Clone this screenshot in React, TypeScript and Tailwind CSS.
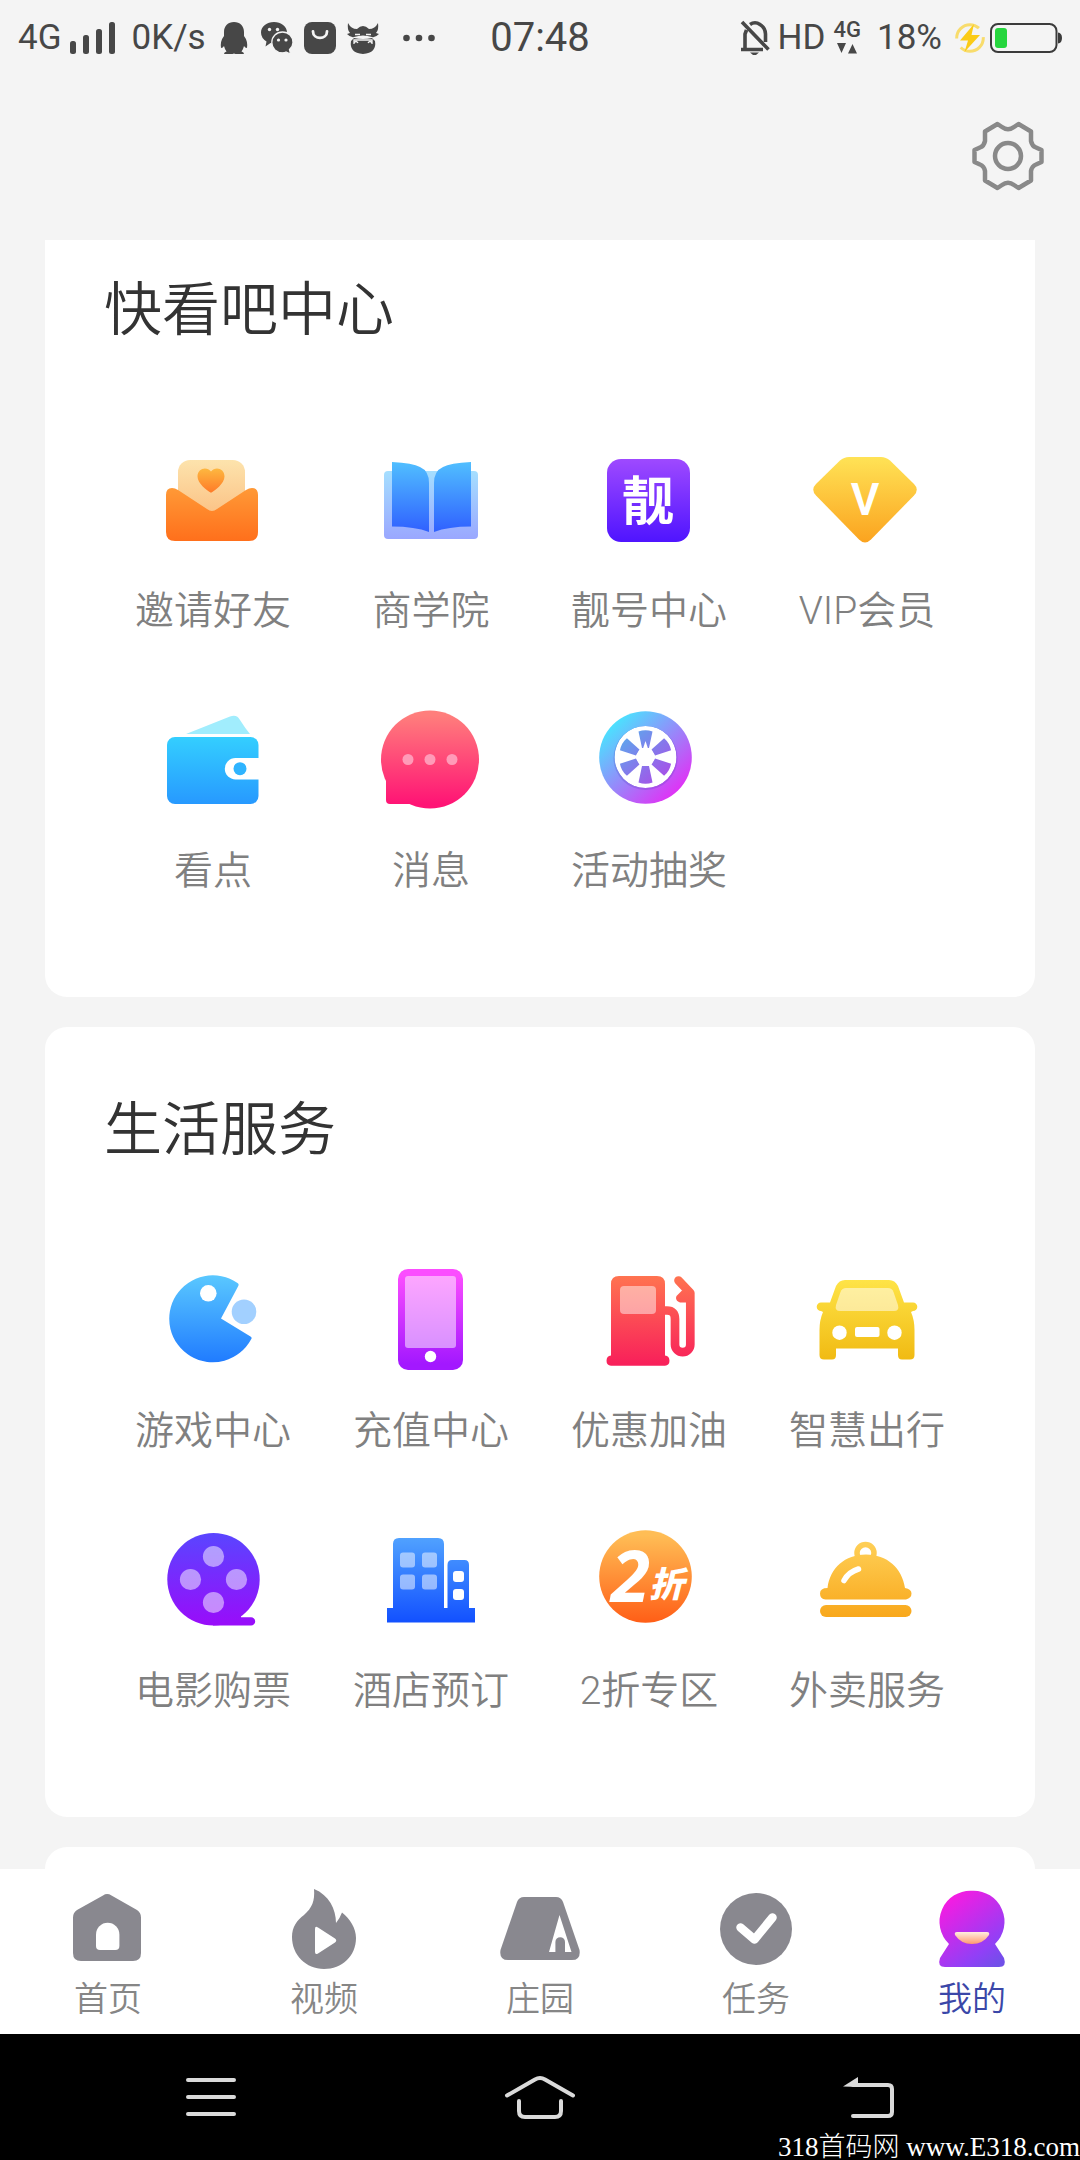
import type { ReactNode } from "react";

type Entry = {
  label: string;
  icon: ReactNode;
};

const Gradient = ({ id, from, to, diagonal = false }: { id: string; from: string; to: string; diagonal?: boolean }) => (
  <linearGradient
    id={id}
    gradientUnits="userSpaceOnUse"
    x1={diagonal ? "20" : "0"}
    y1={diagonal ? "20" : "15"}
    x2={diagonal ? "90" : "0"}
    y2={diagonal ? "95" : "104"}
  >
    <stop offset="0" stopColor={from} />
    <stop offset="1" stopColor={to} />
  </linearGradient>
);

const Art = ({ children }: { children: ReactNode }) => (
  <svg viewBox="0 0 120 120" className="h-[120px] w-[120px]" aria-hidden="true">
    {children}
  </svg>
);

const InviteIcon = () => (
  <Art>
    <defs>
      <Gradient id="invite" from="#ffb347" to="#ff6d1a" />
      <Gradient id="inviteLetter" from="#fde6b0" to="#fab070" />
      <linearGradient id="inviteHeart" x1="0" y1="0" x2="0" y2="1">
        <stop offset="0" stopColor="#fdb840" />
        <stop offset="1" stopColor="#ff7a28" />
      </linearGradient>
    </defs>
    <rect x="25" y="20" width="67" height="60" rx="12" fill="url(#inviteLetter)" />
    <path
      d="M13 55Q13 48 19 48Q22 48 25 50L54 69Q59 73 64 69L93 50Q96 48 99 48Q105 48 105 55V92Q105 101 96 101H22Q13 101 13 92Z"
      fill="url(#invite)"
    />
    <path
      d="M58 52.7C54 50.5 44.5 43.5 44.5 36.5C44.5 28 54 26 58 31.5C62 26 71.5 28 71.5 36.5C71.5 43.5 62 50.5 58 52.7Z"
      fill="url(#inviteHeart)"
    />
  </Art>
);

const BookIcon = () => (
  <Art>
    <defs>
      <Gradient id="book" from="#54c8ff" to="#2a50ff" />
      <Gradient id="bookCover" from="#a8ecff" to="#99a3ff" />
    </defs>
    <rect x="13" y="31" width="94" height="68" rx="4" fill="url(#bookCover)" />
    <path d="M21 22Q42 23 49 27Q58 31 58 43V92Q44 86.5 21 86.5Z" fill="url(#book)" />
    <path d="M100 22Q79 23 72 27Q63 31 63 43V92Q77 86.5 100 86.5Z" fill="url(#book)" />
  </Art>
);

const NumberIcon = () => (
  <Art>
    <defs>
      <Gradient id="number" from="#a24cff" to="#4d13ff" />
    </defs>
    <rect x="18" y="19" width="83" height="83" rx="14" fill="url(#number)" />
    <text x="59" y="80" textAnchor="middle" fontSize="52" fontWeight="700" fill="#fff">
      靓
    </text>
  </Art>
);

const VipIcon = () => (
  <Art>
    <defs>
      <Gradient id="vip" from="#ffe457" to="#fba21e" />
    </defs>
    <path
      d="M42 17H74Q79 17 83 20.5L107 44Q112.5 49.5 107 55.5L64 99.5Q58 105.5 52 99.5L9 55.5Q3.5 49.5 9 44L33 20.5Q37 17 42 17Z"
      fill="url(#vip)"
    />
    <text x="58" y="75" textAnchor="middle" fontSize="44" fontWeight="600" fill="#fff">
      V
    </text>
  </Art>
);

const WalletIcon = () => (
  <Art>
    <defs>
      <Gradient id="wallet" from="#38e0ff" to="#2799ff" />
    </defs>
    <path d="M33 34L77 16.5Q84 14 87 20Q92 28 97 34Z" fill="#a1edfd" />
    <rect x="14" y="37" width="91.5" height="67" rx="8" fill="url(#wallet)" />
    <path d="M106 58H82.5a10.7 10.7 0 0 0 0 21.4H106Z" fill="#fff" />
    <circle cx="87" cy="68.7" r="6.5" fill="#2fb4ff" />
  </Art>
);

const MessageIcon = () => (
  <Art>
    <defs>
      <Gradient id="message" from="#ff7e7c" to="#ff1475" />
    </defs>
    <circle cx="59" cy="59.5" r="49" fill="url(#message)" />
    <path d="M15 76V100Q15 104 19 104H42L50 80Z" fill="url(#message)" />
    <g fill="#ff9bb8">
      <circle cx="37" cy="59.5" r="5.5" />
      <circle cx="59" cy="59.5" r="5.5" />
      <circle cx="81" cy="59.5" r="5.5" />
    </g>
  </Art>
);

const WheelIcon = () => (
  <Art>
    <defs>
      <Gradient id="wheel" from="#42ecff" to="#e52cf5" diagonal />
      <mask id="wheelMask">
        <circle cx="56.5" cy="57" r="31" fill="#fff" />
        {[0, 60, 120, 180, 240, 300].map((angle) => (
          <path
            key={angle}
            d="M49.5 31.5Q56.5 29 63.5 31.5L60 48H53Z"
            fill="#000"
            transform={`rotate(${angle} 56.5 57)`}
          />
        ))}
        <path d="M53.5 50L56.5 41L59.5 50Z" fill="#fff" />
        <circle cx="56.5" cy="57" r="9" fill="#fff" />
      </mask>
    </defs>
    <circle cx="56.5" cy="57.5" r="46.3" fill="url(#wheel)" />
    <circle cx="56.5" cy="58" r="32" fill="#4a3fb8" opacity="0.22" />
    <circle cx="56.5" cy="57" r="31" fill="#fff" mask="url(#wheelMask)" />
  </Art>
);

const GameIcon = () => (
  <Art>
    <defs>
      <Gradient id="game" from="#5ac8ff" to="#1f7aff" />
    </defs>
    <path d="M84.5 23A43.5 43.5 0 1 0 98 79.5Q99.5 77.5 97.5 76.5L68 58.5L85 26.5Q86.5 24.2 84.5 23Z" fill="url(#game)" />
    <circle cx="55.3" cy="33.3" r="8.3" fill="#fff" />
    <circle cx="91" cy="51.7" r="12.3" fill="#a2d0ff" />
  </Art>
);

const PhoneIcon = () => (
  <Art>
    <defs>
      <Gradient id="phone" from="#fb4dff" to="#a318ff" />
    </defs>
    <rect x="27" y="9" width="65" height="101" rx="10" fill="url(#phone)" />
    <rect x="34" y="16" width="51" height="72" rx="3" fill="#fff" opacity="0.5" />
    <circle cx="59.5" cy="96.5" r="5.7" fill="#fff" />
  </Art>
);

const FuelIcon = () => (
  <Art>
    <defs>
      <Gradient id="fuel" from="#ff7450" to="#f8205a" />
    </defs>
    <path
      d="M30 16H68Q76 16 76 24V95.5a5.2 5.2 0 0 1 0 10.3H22a5.2 5.2 0 0 1 0-10.3V24Q22 16 30 16Z"
      fill="url(#fuel)"
    />
    <path
      d="M75 50.5H78Q86 50.5 86 59V84.5a7.6 7.6 0 0 0 15.3 0V33L89.5 20.5"
      fill="none"
      stroke="url(#fuel)"
      strokeWidth="8.7"
      strokeLinecap="round"
      strokeLinejoin="round"
    />
    <path d="M93 30.5L87.5 36Q86 39 89 41.5L91 42.5H99V30Z" fill="url(#fuel)" />
    <rect x="31" y="26" width="36" height="28" rx="4" fill="#fff" opacity="0.48" />
  </Art>
);

const CarIcon = () => (
  <Art>
    <defs>
      <Gradient id="car" from="#ffe64a" to="#f0b810" />
    </defs>
    <path
      d="M38 20H82Q88 20 91 26L97 42.5H106a4.3 4.3 0 0 1 0 8.6L104 52Q107.5 60 107.5 70V95Q107.5 99.5 103 99.5H95Q91 99.5 91 95V88.5H29V95Q29 99.5 25 99.5H17Q12.5 99.5 12.5 95V70Q12.5 60 16 52L14 51.1a4.3 4.3 0 0 1 0-8.6H23L29 26Q32 20 38 20Z"
      fill="url(#car)"
    />
    <path d="M39 28H81Q85 28 86.5 32L91 45Q92.5 51 87 51H33Q27.5 51 29 45L33.5 32Q35 28 39 28Z" fill="#fff" opacity="0.5" />
    <circle cx="32.5" cy="72.7" r="7.2" fill="#fff" />
    <circle cx="87.5" cy="72.7" r="7.2" fill="#fff" />
    <rect x="48" y="67" width="24.5" height="10" rx="2" fill="#fff" />
  </Art>
);

const FilmIcon = () => (
  <Art>
    <defs>
      <Gradient id="film" from="#5b44ff" to="#980dfa" />
    </defs>
    <circle cx="60.5" cy="59.3" r="46.2" fill="url(#film)" />
    <path d="M60 90H88V97.2H98a4.2 4.2 0 0 1 0 8.4H60Z" fill="url(#film)" />
    <g fill="#fff" opacity="0.5">
      <circle cx="60.5" cy="36.5" r="10.6" />
      <circle cx="37.5" cy="59.5" r="10.6" />
      <circle cx="83.5" cy="59.5" r="10.6" />
      <circle cx="60.5" cy="82.5" r="10.6" />
    </g>
  </Art>
);

const HotelIcon = () => (
  <Art>
    <defs>
      <Gradient id="hotel" from="#52a4ff" to="#114fff" />
    </defs>
    <path
      d="M16 88H22V24Q22 18 28 18H67Q73 18 73 24V88H76.5V45Q76.5 40 81 40H93.5Q98 40 98 45V88H104V102.5H16Z"
      fill="url(#hotel)"
    />
    <g fill="#fff" opacity="0.5">
      <rect x="29" y="32.5" width="15" height="15" rx="3" />
      <rect x="51" y="32.5" width="15" height="15" rx="3" />
      <rect x="29" y="54.5" width="15" height="15" rx="3" />
      <rect x="51" y="54.5" width="15" height="15" rx="3" />
    </g>
    <rect x="82" y="51" width="11" height="11" rx="3" fill="#fff" />
    <rect x="82" y="69" width="11" height="11" rx="3" fill="#fff" />
  </Art>
);

const DiscountIcon = () => (
  <Art>
    <defs>
      <Gradient id="discount" from="#ffbd55" to="#ff5d16" />
    </defs>
    <circle cx="56.5" cy="56.5" r="46.3" fill="url(#discount)" />
    <text x="22" y="81.5" fontFamily="Open Sans" fontSize="71" fontWeight="700" fontStyle="italic" fill="#fff">
      2
    </text>
    <text x="60" y="77" fontSize="35" fontWeight="900" fontStyle="italic" fill="#fff">
      折
    </text>
  </Art>
);

const DishIcon = () => (
  <Art>
    <defs>
      <Gradient id="dish" from="#ffd35c" to="#f8a416" />
    </defs>
    <circle cx="58.5" cy="33" r="8.5" fill="none" stroke="url(#dish)" strokeWidth="5.5" />
    <path
      d="M20.5 68C23 48 38 34.5 59 34.5S95 48 98 68Q104.5 69 104.5 73.5T99 79.5H18.5Q13 79 13 73.5T20.5 68Z"
      fill="url(#dish)"
    />
    <rect x="13" y="85" width="91.5" height="12" rx="6" fill="url(#dish)" />
    <path d="M37 60.5Q41.5 52 51.5 49" fill="none" stroke="#fff" strokeWidth="5.5" strokeLinecap="round" />
  </Art>
);

const TabArt = ({ children }: { children: ReactNode }) => (
  <svg viewBox="0 0 80 80" className="h-20 w-20" fill="#89888f" aria-hidden="true">
    {children}
  </svg>
);

const tabs: Entry[] = [
  {
    label: "首页",
    icon: (
      <TabArt>
        <path d="M35 6.5Q39 3.7 43.5 6.5L69 21Q73 23.5 73 28.5V64Q73 72 65 72H13Q5 72 5 64V28.5Q5 23.5 9 21Z" />
        <path d="M28 45.5a11.7 11.7 0 0 1 23.4 0V57q0 4-4 4H32q-4 0-4-4Z" fill="#fff" />
      </TabArt>
    ),
  },
  {
    label: "视频",
    icon: (
      <TabArt>
        <path d="M30 0C45 6 52 20 52 34Q56 29 58 23.5C66 30 72 39 72 49C72 67 58 80 40 80C22 80 8 66 8 48C8 38 13 31 20 26C28 19 31 12 30 0Z" />
        <path d="M31 40Q31 36.5 34 38.5L51 49.5Q53.5 51.5 51 53.5L34 64.5Q31 66 31 63Z" fill="#fff" />
      </TabArt>
    ),
  },
  {
    label: "庄园",
    icon: (
      <TabArt>
        <path d="M24 8H56Q61 8 63 13L79.5 61Q81 71 72 71H8Q-1 71 0.5 61L17 13Q19 8 24 8Z" />
        <path d="M59.5 26L71.5 63H65V53a4.8 4.8 0 0 0-9.6 0V63H49Z" fill="#fff" />
      </TabArt>
    ),
  },
  {
    label: "任务",
    icon: (
      <TabArt>
        <circle cx="40" cy="40" r="36" />
        <path d="M24.5 38.5L38.5 50.5L56.5 28.5" fill="none" stroke="#fff" strokeWidth="8.5" strokeLinecap="round" strokeLinejoin="round" />
      </TabArt>
    ),
  },
  {
    label: "我的",
    icon: (
      <TabArt>
        <defs>
          <linearGradient id="me" gradientUnits="userSpaceOnUse" x1="18" y1="10" x2="68" y2="75">
            <stop offset="0" stopColor="#f41ce2" />
            <stop offset="0.75" stopColor="#9040f6" />
            <stop offset="1" stopColor="#7050e8" />
          </linearGradient>
          <linearGradient id="smile" x1="0" y1="0" x2="0" y2="1">
            <stop offset="0" stopColor="#ffeee0" />
            <stop offset="1" stopColor="#ff9870" />
          </linearGradient>
        </defs>
        <path d="M40 1.7A31 31 0 0 1 63 55L72 69Q75 78 67 78H13Q5 78 8 69L17 55A31 31 0 0 1 40 1.7Z" fill="url(#me)" />
        <path d="M25 43H55Q58 43 57 46Q51 55 40 55T23 46Q22 43 25 43Z" fill="url(#smile)" />
      </TabArt>
    ),
  },
];

const centerEntries: Entry[] = [
  { label: "邀请好友", icon: <InviteIcon /> },
  { label: "商学院", icon: <BookIcon /> },
  { label: "靓号中心", icon: <NumberIcon /> },
  { label: "VIP会员", icon: <VipIcon /> },
  { label: "看点", icon: <WalletIcon /> },
  { label: "消息", icon: <MessageIcon /> },
  { label: "活动抽奖", icon: <WheelIcon /> },
];

const lifeEntries: Entry[] = [
  { label: "游戏中心", icon: <GameIcon /> },
  { label: "充值中心", icon: <PhoneIcon /> },
  { label: "优惠加油", icon: <FuelIcon /> },
  { label: "智慧出行", icon: <CarIcon /> },
  { label: "电影购票", icon: <FilmIcon /> },
  { label: "酒店预订", icon: <HotelIcon /> },
  { label: "2折专区", icon: <DiscountIcon /> },
  { label: "外卖服务", icon: <DishIcon /> },
];

const StatusBar = () => (
  <div className="flex h-[75px] items-center px-[18px] text-[35px] leading-none text-[#474747]">
    <div className="flex flex-1 items-center">
      <span>4G</span>
      <svg viewBox="0 0 46 34" className="ml-2 h-[34px] w-[46px]" fill="currentColor" aria-hidden="true">
        <rect x="0" y="20" width="6" height="13" rx="2.5" />
        <rect x="13" y="14" width="6" height="19" rx="2.5" />
        <rect x="26" y="8" width="6" height="25" rx="2.5" />
        <rect x="39" y="1" width="6" height="32" rx="2.5" />
      </svg>
      <span className="ml-4">0K/s</span>
      <div className="ml-3 flex items-center gap-[11px]">
        <svg viewBox="0 0 32 34" className="h-[34px] w-8" fill="currentColor" aria-hidden="true">
          <path d="M16 1C22 1 26 5 26 11V15Q30 20 29 27Q27 27 26 25Q25 29 23.5 30.5Q26 31 26 33H17.5L16 32.5L14.5 33H6Q6 31 8.5 30.5Q7 29 6 25Q5 27 3 27Q2 20 6 15V11C6 5 10 1 16 1Z" />
        </svg>
        <svg viewBox="0 0 32 34" className="h-[34px] w-8" fill="currentColor" aria-hidden="true">
          <path d="M13 1C20 1 26 5.5 26 11.5S20 22.5 13 22.5Q11 22.5 9.5 22L4.5 25.5L5.5 20.5Q0 17 0 11.5C0 5.5 6 1 13 1Z" />
          <path
            d="M21.5 11C27.5 11 32 15.5 32 21.5Q32 25.5 28.5 28.5L29.5 33L25 31Q23.5 31.8 21.5 31.8C15.5 31.8 10.8 27.5 10.8 21.5S15.5 11 21.5 11Z"
            stroke="#f4f4f4"
            strokeWidth="1.3"
          />
          <g fill="#f4f4f4">
            <circle cx="8.5" cy="8.5" r="1.7" />
            <circle cx="16.5" cy="8.5" r="1.7" />
            <circle cx="17.5" cy="19" r="1.6" />
            <circle cx="25" cy="19" r="1.6" />
          </g>
        </svg>
        <svg viewBox="0 0 32 34" className="h-[34px] w-8" aria-hidden="true">
          <rect x="0" y="1" width="32" height="32" rx="8" fill="currentColor" />
          <path d="M9 10.5C9 19 23 19 23 10.5" fill="none" stroke="#f4f4f4" strokeWidth="2.8" strokeLinecap="round" />
        </svg>
        <svg viewBox="0 0 32 34" className="h-[34px] w-8" fill="currentColor" aria-hidden="true">
          <path d="M1 2Q0 9 3 12L0 13Q4 17 7 16Q16 13 25 16Q28 17 32 13L29 12Q32 9 31 2Q28 8 22 8Q16 2 10 8Q4 8 1 2Z" />
          <path d="M7 17Q16 19 25 17L28 20Q30 32 16 33Q2 32 4 20Z" />
          <path d="M8 13.5H13M19 13.5H24M7 23V19H25V23M7 22Q9 19 11 22M21 22Q23 19 25 22" fill="none" stroke="#f4f4f4" strokeWidth="1.3" />
        </svg>
      </div>
      <svg viewBox="0 0 32 8" className="ml-6 h-2 w-8" fill="currentColor" aria-hidden="true">
        <circle cx="3.5" cy="4" r="3.3" />
        <circle cx="16" cy="4" r="3.3" />
        <circle cx="28.5" cy="4" r="3.3" />
      </svg>
    </div>
    <time className="text-[40px]">07:48</time>
    <div className="flex flex-1 items-center justify-end">
      <svg viewBox="0 0 30 36" className="h-9 w-[30px]" fill="none" stroke="currentColor" strokeWidth="3.6" aria-hidden="true">
        <path d="M5 30V14L6.5 10M10 4.5Q15 1 20 4.5Q25.5 8 25.5 14V22M1 29.5H23M2 2L28.5 29.5" />
        <path d="M10 32.5H19L16 35H13Z" fill="currentColor" stroke="none" />
      </svg>
      <span className="ml-2">HD</span>
      <div className="ml-2 flex flex-col items-center gap-1 text-[22px] font-medium leading-[18px]">
        <span>4G</span>
        <svg viewBox="0 0 20 11" className="h-[11px] w-5" fill="currentColor" aria-hidden="true">
          <path d="M0 0H9L4.5 10ZM11 10.5H20L15.5 1Z" />
        </svg>
      </div>
      <span className="ml-4">18%</span>
      <svg viewBox="0 0 32 32" className="ml-3 h-8 w-8" aria-hidden="true">
        <circle cx="16" cy="16" r="13.3" fill="none" stroke="#f8dc6c" strokeWidth="3" strokeDasharray="31 10" />
        <path d="M20 2L6 18.5H14L10.5 30L26 13H17.5Z" fill="#fbcb16" />
      </svg>
      <svg viewBox="0 0 72 32" className="ml-1 h-8 w-[72px]" aria-hidden="true">
        <rect x="1" y="2" width="65.5" height="28" rx="7" fill="none" stroke="#3b3b3b" strokeWidth="2" />
        <path d="M68 10.5Q72 11 72 16T68 21.5Z" fill="#3b3b3b" />
        <rect x="5" y="6" width="12" height="20" rx="3" fill="#26d63e" />
      </svg>
    </div>
  </div>
);

const EntryGrid = ({ entries }: { entries: Entry[] }) => (
  <div className="mt-[90px] grid grid-cols-4 gap-y-[60px]">
    {entries.map((entry) => (
      <button key={entry.label} type="button" className="flex flex-col items-center">
        {entry.icon}
        <span className="mt-[22px] whitespace-nowrap text-[39px] font-[350] leading-[58px] text-[#808080]">{entry.label}</span>
      </button>
    ))}
  </div>
);

const App = () => {
  return (
    <div className="relative flex min-h-screen flex-col bg-[#f4f4f4] font-['Roboto','Noto_Sans_CJK_SC',sans-serif]">
      <header>
        <StatusBar />
        <div className="flex h-[165px] items-start justify-end pr-[35px] pt-11">
          <button type="button" aria-label="设置">
            <svg viewBox="-37 -37 74 74" className="h-[74px] w-[74px]" fill="none" stroke="#898989" strokeWidth="4.5" strokeLinejoin="round" aria-hidden="true">
              <path d="M-6 -29Q0 -24.5 6 -29L10.5 -32L23 -24.5V-15Q24 -10 28 -8.5L33.5 -6V6L28 8.5Q24 10 23 15V24.5L10.5 32L6 29Q0 24.5 -6 29L-10.5 32L-23 24.5V15Q-24 10 -28 8.5L-33.5 6V-6L-28 -8.5Q-24 -10 -23 -15V-24.5L-10.5 -32Z" />
              <circle r="13" />
            </svg>
          </button>
        </div>
      </header>

      <main className="flex flex-1 flex-col gap-[30px] px-[45px]">
        <section className="rounded-b-[22px] bg-white px-[59px] pb-[97px] pt-[30px]">
          <h2 className="text-[58px] font-[350] leading-[80px] text-[#333]">快看吧中心</h2>
          <EntryGrid entries={centerEntries} />
        </section>
        <section className="rounded-[22px] bg-white px-[59px] pb-[97px] pt-[63px]">
          <h2 className="text-[58px] font-[350] leading-[80px] text-[#333]">生活服务</h2>
          <EntryGrid entries={lifeEntries} />
        </section>
        <section className="flex-1 rounded-t-[22px] bg-white"></section>
      </main>

      <nav className="grid grid-cols-5 bg-white pb-[10px] pt-5">
        {tabs.map((tab) => (
          <a key={tab.label} href="#" className="flex flex-col items-center gap-[5px]">
            {tab.icon}
            <span
              className={
                tab.label === "我的"
                  ? "text-[34px] font-[350] leading-[50px] text-[#3a47a8]"
                  : "text-[34px] font-[350] leading-[50px] text-[#868686]"
              }
            >
              {tab.label}
            </span>
          </a>
        ))}
      </nav>

      <div className="grid h-[126px] grid-cols-3 items-center bg-black px-[46px]">
        <button type="button" aria-label="菜单" className="flex justify-center">
          <svg viewBox="0 0 72 48" className="h-12 w-[72px]" stroke="#dadada" strokeWidth="4" strokeLinecap="round">
            <path d="M13 7H59M13 24H59M13 41H59" />
          </svg>
        </button>
        <button type="button" aria-label="主页" className="flex justify-center">
          <svg viewBox="0 0 72 48" className="h-12 w-[72px]" fill="none" stroke="#dadada" strokeWidth="4" strokeLinecap="round">
            <path d="M3 22.5L31 6.5Q36 3.5 41 6.5L69 22.5" />
            <path d="M15 28V38Q15 44 21 44H51Q57 44 57 38V28" />
          </svg>
        </button>
        <button type="button" aria-label="返回" className="flex justify-center">
          <svg viewBox="0 0 72 48" className="h-12 w-[72px]" fill="none" stroke="#dadada" strokeWidth="4" strokeLinecap="round">
            <path d="M20 12H55Q59 12 59 16V39Q59 43 55 43H20" />
            <path d="M10 13.5L25 4V14Z" fill="#dadada" stroke="none" />
          </svg>
        </button>
      </div>

      <p className="absolute bottom-0 right-0 whitespace-nowrap font-['Liberation_Serif','Noto_Sans_CJK_SC',serif] text-[27px] font-light leading-[26px] text-white">
        318首码网 www.E318.com
      </p>
    </div>
  );
};

export default App;
